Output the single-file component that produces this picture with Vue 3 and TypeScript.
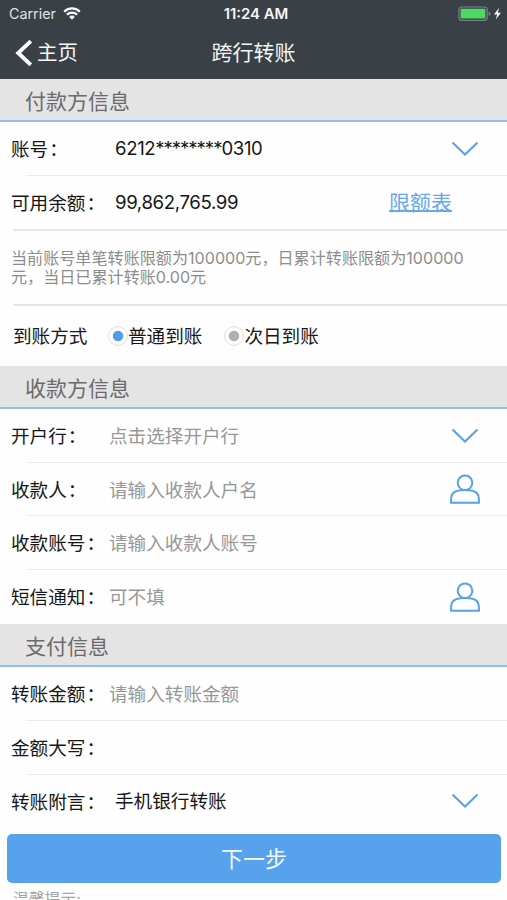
<script setup lang="ts">
import { ref } from 'vue'

interface Field {
  label: string
  value?: string
  placeholder?: string
  icon?: 'chevron' | 'person'
}

const payee: Field[] = [
  { label: '开户行', placeholder: '点击选择开户行', icon: 'chevron' },
  { label: '收款人', placeholder: '请输入收款人户名', icon: 'person' },
  { label: '收款账号', placeholder: '请输入收款人账号' },
  { label: '短信通知', placeholder: '可不填', icon: 'person' },
]

const payment: Field[] = [
  { label: '转账金额', placeholder: '请输入转账金额' },
  { label: '金额大写' },
  { label: '转账附言', value: '手机银行转账', icon: 'chevron' },
]

const groups = [
  { title: '收款方信息', fields: payee },
  { title: '支付信息', fields: payment },
]

const arrivals = ['普通到账', '次日到账']
const arrival = ref(0)
</script>

<template>
  <div class="screen">
    <header class="top">
      <div class="status">
        <div class="carrier">
          <span>Carrier</span>
          <svg width="18" height="13" viewBox="0 0 18 13" fill="none" stroke="#fff" stroke-width="2.3">
            <path d="M1.2 4.7a11 11 0 0 1 15.6 0M4 7.6a7.1 7.1 0 0 1 10 0" />
            <path d="M6.2 9.9a4 4 0 0 1 5.6 0L9 12.7z" fill="#fff" stroke="none" />
          </svg>
        </div>
        <span class="time">11:24 AM</span>
        <div class="power">
          <svg width="45" height="16" viewBox="0 0 45 16">
            <rect x="0.9" y="1" width="28.3" height="13.3" rx="3" fill="none" stroke="#7d8387" stroke-width="1.2" />
            <rect x="2.6" y="2.8" width="24.8" height="9.7" rx="1.2" fill="#4cd964" />
            <path d="M30.7 5.3q1.8.6 1.8 2.4t-1.8 2.4z" fill="#7d8387" />
            <path d="M41.2 1.8 36 8.4h3.2l-1.5 5.2 5.2-6.9h-3.2z" fill="#fff" />
          </svg>
        </div>
      </div>
      <nav class="nav">
        <div class="back">
          <svg width="18" height="28" viewBox="0 0 18 28" fill="none" stroke="#fff" stroke-width="3.9">
            <path d="M15.8 2.2 3.2 14l12.6 11.8" />
          </svg>
          <span>主页</span>
        </div>
        <h1>跨行转账</h1>
        <span></span>
      </nav>
    </header>

    <h2 class="section">付款方信息</h2>
    <div class="row">
      <span class="label">账号<i>：</i></span>
      <span class="value digits">6212<span class="mask">********</span>0310</span>
      <svg class="icon" width="30" height="18" viewBox="0 0 30 18"><path d="M2.5 2.5 15 14.5 27.5 2.5" /></svg>
    </div>
    <div class="row balance">
      <span class="label">可用余额<i>：</i></span>
      <span class="value digits">99,862,765.99</span>
      <a class="link">限额表</a>
    </div>
    <p class="notice">当前账号单笔转账限额为100000元，日累计转账限额为100000<br />元，当日已累计转账0.00元</p>
    <div class="arrival">
      <span class="arrival-title">到账方式</span>
      <div v-for="(name, i) in arrivals" :key="name" class="option" @click="arrival = i">
        <span class="radio" :class="{ on: arrival === i }"></span>
        <span>{{ name }}</span>
      </div>
    </div>

    <template v-for="group in groups" :key="group.title">
      <h2 class="section">{{ group.title }}</h2>
      <div v-for="field in group.fields" :key="field.label" class="row entry">
        <span class="label">{{ field.label }}<i>：</i></span>
        <span v-if="field.placeholder" class="placeholder">{{ field.placeholder }}</span>
        <span v-else class="value">{{ field.value }}</span>
        <svg v-if="field.icon === 'chevron'" class="icon" width="30" height="18" viewBox="0 0 30 18">
          <path d="M2.5 2.5 15 14.5 27.5 2.5" />
        </svg>
        <svg v-if="field.icon === 'person'" class="icon" width="30" height="30" viewBox="0 0 30 30">
          <circle cx="15" cy="8.7" r="7.3" />
          <path d="M10.2 16.3C4.2 16.8 1.1 20 1.1 25v3.8h27.8V25c0-5-3.1-8.2-9.1-8.7q-4.8-.7-9.6 0z" />
        </svg>
      </div>
    </template>

    <button class="next">下一步</button>
    <p class="tip">温馨提示:</p>
  </div>
</template>

<style>
body {
  margin: 0;
}
</style>

<style scoped>
.screen {
  width: 507px;
  height: 900px;
  overflow: hidden;
  background: #fefefe;
  color: #161616;
  font-family: Inter, 'Noto Sans CJK SC', sans-serif;
  font-size: 18.6px;
  line-height: 1;
}
.top {
  height: 79px;
  background: #394147;
  color: #f4f6f7;
}
.status {
  display: grid;
  grid-template-columns: 1fr auto 1fr;
  align-items: center;
  height: 27px;
  padding: 0 4px 0 9px;
}
.carrier {
  display: flex;
  align-items: center;
  gap: 7px;
  color: #dfe2e4;
  font-size: 14.3px;
}
.carrier span,
.time {
  padding-top: 2px;
}
.time {
  font-size: 14.9px;
  font-weight: 600;
}
.power {
  display: flex;
  justify-content: flex-end;
}
.nav {
  display: grid;
  grid-template-columns: 1fr auto 1fr;
  align-items: center;
  height: 52px;
}
.back {
  display: flex;
  align-items: center;
  gap: 4px;
  padding-left: 15px;
  font-size: 20.5px;
}
h1 {
  margin: 0;
  padding-bottom: 2px;
  font-size: 21px;
  font-weight: 400;
}
.section {
  box-sizing: border-box;
  height: 43px;
  margin: 0;
  padding: 0 0 0 25px;
  border-bottom: 2px solid #91bfec;
  background: #e4e4e4;
  color: #6b6b6b;
  font-size: 21px;
  font-weight: 400;
  line-height: 45px;
}
.row {
  box-sizing: border-box;
  display: flex;
  align-items: center;
  height: 53.8px;
  padding: 0 27px 0 11px;
  background: linear-gradient(#ececec, #ececec) 26px 100% / 100% 1px no-repeat;
}
.row:has(+ .section),
.row:has(+ .next) {
  background: none;
}
.balance {
  height: 55px;
  background: linear-gradient(#e5e5e5, #e5e5e5) 13px 100% / 100% 2px no-repeat;
}
.label {
  width: 98px;
  white-space: nowrap;
}
.label i {
  padding-left: 1px;
  font-style: normal;
}
.entry .label,
.entry .placeholder {
  padding-top: 1px;
}
.value {
  padding: 0 0 1px 6px;
}
.digits {
  padding-bottom: 2px;
  letter-spacing: -0.36px;
}
.mask {
  letter-spacing: -1.06px;
}
.placeholder {
  color: #979797;
}
.icon {
  margin-left: auto;
  fill: none;
  stroke: #57a0ea;
  stroke-width: 2;
}
.link {
  margin: 0 28px 0 auto;
  padding-bottom: 2px;
  color: #65a8eb;
  font-size: 21px;
  text-decoration: underline;
  text-decoration-thickness: 1.5px;
  text-underline-offset: 0;
}
.notice {
  box-sizing: border-box;
  height: 75px;
  margin: 0;
  padding: 18px 0 0 11px;
  background: linear-gradient(#e5e5e5, #e5e5e5) 13px 100% / 100% 2px no-repeat;
  color: #8d8d8d;
  font-size: 16.1px;
  line-height: 19px;
  white-space: nowrap;
}
.arrival {
  display: flex;
  align-items: center;
  height: 60px;
  padding-left: 13px;
}
.arrival-title {
  width: 95px;
}
.option {
  display: flex;
  align-items: center;
  margin-right: 22px;
}
.radio {
  box-sizing: border-box;
  width: 20px;
  height: 20px;
  border: 1.5px solid #dedede;
  border-radius: 50%;
  background: radial-gradient(circle, #b0b0b0 4.8px, #fff 5.6px);
}
.radio.on {
  background: radial-gradient(circle, #509eea 4.8px, #fff 5.6px);
}
.next {
  display: block;
  width: 494px;
  height: 49px;
  margin: 6px 0 0 7px;
  padding: 0 0 3px;
  border: 0;
  border-radius: 5px;
  background: #57a2ed;
  color: #f5faff;
  font-family: inherit;
  font-size: 22px;
}
.tip {
  margin: 9px 0 0 13px;
  color: #a3a3a3;
  font-size: 15.8px;
}
</style>
